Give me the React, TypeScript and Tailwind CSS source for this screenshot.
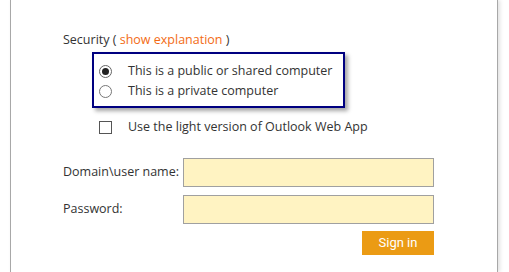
import React from "react";

export default function App() {
  return (
    <div className="h-[272px] w-[509px] bg-white overflow-hidden font-['Open_Sans',sans-serif] text-[12.5px] text-[#333]">
      <div className="ml-[10px] h-full w-[488px] border-x border-[#a8a8a8] shadow-[2px_0_4px_rgba(0,0,0,0.12)] pl-[52px] pt-[31px]">
        {/* Security */}
        <div className="leading-[18px]">
          Security ( <span className="text-[#f36b14]">show explanation</span> )
        </div>

        <div className="mt-[3px] ml-[29px] w-[253px] h-[56px] border-2 border-[#000080] shadow-[3px_3px_4px_rgba(0,0,0,0.35)] pl-[5px] pt-[7px]">
          <label className="flex items-center h-[20px]">
            <span className="w-[13px] h-[13px] rounded-full border border-[#666] flex items-center justify-center">
              <span className="w-[7px] h-[7px] rounded-full bg-[#222]" />
            </span>
            <span className="ml-[16px]">This is a public or shared computer</span>
          </label>
          <label className="flex items-center h-[20px]">
            <span className="w-[13px] h-[13px] rounded-full border border-[#777]" />
            <span className="ml-[16px]">This is a private computer</span>
          </label>
        </div>

        <label className="mt-[9px] ml-[36px] flex items-center h-[20px]">
          <span className="w-[13px] h-[13px] border border-[#555]" />
          <span className="ml-[16px]">Use the light version of Outlook Web App</span>
        </label>

        <div className="mt-[21px] flex items-center">
          <span className="w-[120px] whitespace-nowrap">Domain\user name:</span>
          <input className="w-[251px] h-[29px] bg-[#fff3c2] border border-[#a0a0a0] outline-none" />
        </div>
        <div className="mt-[8px] flex items-center">
          <span className="w-[120px] whitespace-nowrap">Password:</span>
          <input type="password" className="w-[251px] h-[29px] bg-[#fff3c2] border border-[#a0a0a0] outline-none" />
        </div>
        <div className="mt-[7px] w-[371px] flex justify-end">
          <button className="w-[72px] h-[24px] bg-[#eb9b14] text-white text-[13px] font-['Roboto',sans-serif] leading-[24px]">
            Sign in
          </button>
        </div>
      </div>
    </div>
  );
}
